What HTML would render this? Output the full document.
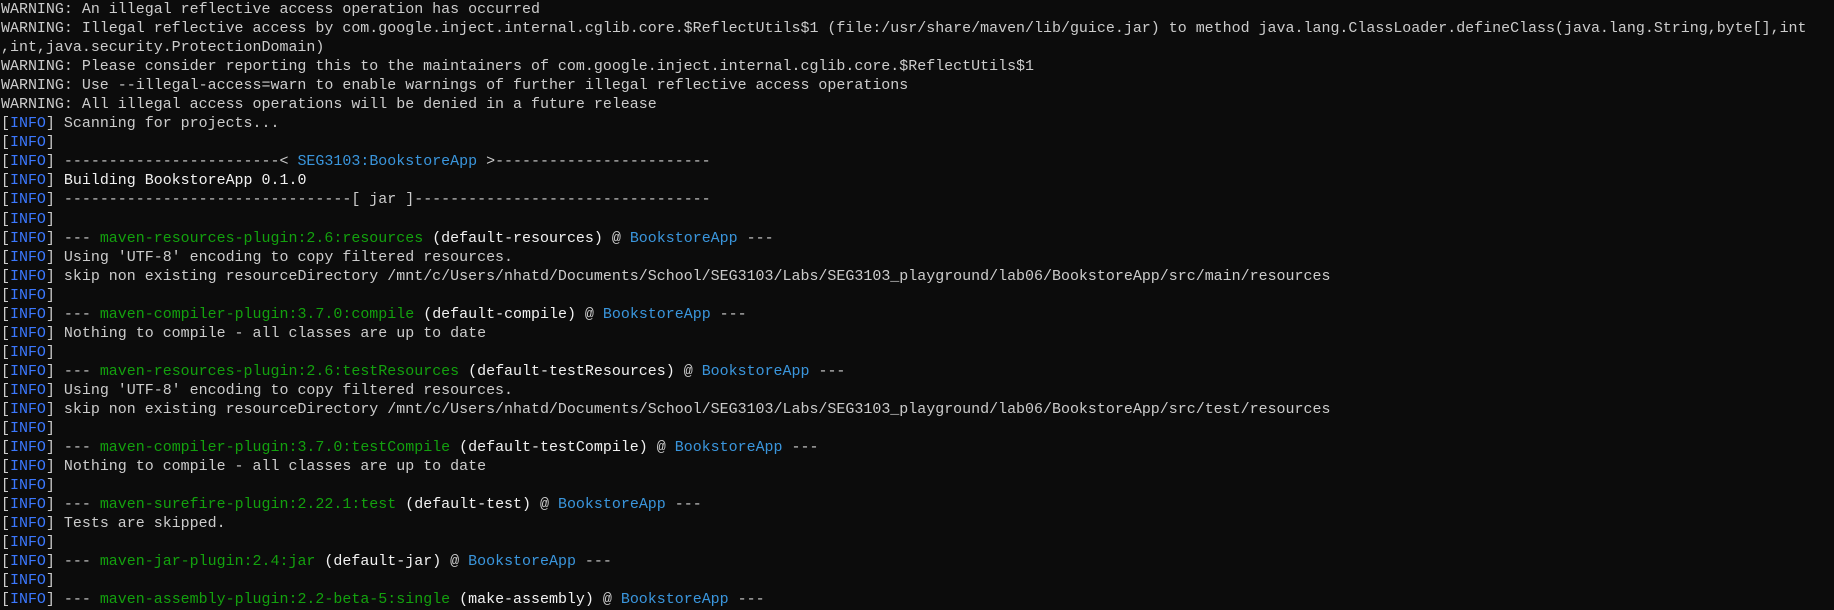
<!DOCTYPE html>
<html><head><meta charset="utf-8"><style>
html,body{margin:0;padding:0;background:#0c0c0c;width:1834px;height:610px;overflow:hidden}
pre{margin:1px 0 0 0;padding:0 0 0 1px;font-family:"Liberation Mono",monospace;font-size:14.98px;line-height:19.05px;color:#cccccc;white-space:pre}
.i{color:#3b78ff}.g{color:#13a10e}.b{color:#3a96dd}.w{color:#f2f2f2}
</style></head><body><pre>WARNING: An illegal reflective access operation has occurred
WARNING: Illegal reflective access by com.google.inject.internal.cglib.core.$ReflectUtils$1 (file:/usr/share/maven/lib/guice.jar) to method java.lang.ClassLoader.defineClass(java.lang.String,byte[],int
,int,java.security.ProtectionDomain)
WARNING: Please consider reporting this to the maintainers of com.google.inject.internal.cglib.core.$ReflectUtils$1
WARNING: Use --illegal-access=warn to enable warnings of further illegal reflective access operations
WARNING: All illegal access operations will be denied in a future release
[<span class="i">INFO</span>] Scanning for projects...
[<span class="i">INFO</span>]
[<span class="i">INFO</span>] ------------------------&lt; <span class="b">SEG3103:BookstoreApp</span> &gt;------------------------
[<span class="i">INFO</span>] <span class="w">Building BookstoreApp 0.1.0</span>
[<span class="i">INFO</span>] --------------------------------[ jar ]---------------------------------
[<span class="i">INFO</span>]
[<span class="i">INFO</span>] --- <span class="g">maven-resources-plugin:2.6:resources</span> <span class="w">(default-resources)</span> @ <span class="b">BookstoreApp</span> ---
[<span class="i">INFO</span>] Using 'UTF-8' encoding to copy filtered resources.
[<span class="i">INFO</span>] skip non existing resourceDirectory /mnt/c/Users/nhatd/Documents/School/SEG3103/Labs/SEG3103_playground/lab06/BookstoreApp/src/main/resources
[<span class="i">INFO</span>]
[<span class="i">INFO</span>] --- <span class="g">maven-compiler-plugin:3.7.0:compile</span> <span class="w">(default-compile)</span> @ <span class="b">BookstoreApp</span> ---
[<span class="i">INFO</span>] Nothing to compile - all classes are up to date
[<span class="i">INFO</span>]
[<span class="i">INFO</span>] --- <span class="g">maven-resources-plugin:2.6:testResources</span> <span class="w">(default-testResources)</span> @ <span class="b">BookstoreApp</span> ---
[<span class="i">INFO</span>] Using 'UTF-8' encoding to copy filtered resources.
[<span class="i">INFO</span>] skip non existing resourceDirectory /mnt/c/Users/nhatd/Documents/School/SEG3103/Labs/SEG3103_playground/lab06/BookstoreApp/src/test/resources
[<span class="i">INFO</span>]
[<span class="i">INFO</span>] --- <span class="g">maven-compiler-plugin:3.7.0:testCompile</span> <span class="w">(default-testCompile)</span> @ <span class="b">BookstoreApp</span> ---
[<span class="i">INFO</span>] Nothing to compile - all classes are up to date
[<span class="i">INFO</span>]
[<span class="i">INFO</span>] --- <span class="g">maven-surefire-plugin:2.22.1:test</span> <span class="w">(default-test)</span> @ <span class="b">BookstoreApp</span> ---
[<span class="i">INFO</span>] Tests are skipped.
[<span class="i">INFO</span>]
[<span class="i">INFO</span>] --- <span class="g">maven-jar-plugin:2.4:jar</span> <span class="w">(default-jar)</span> @ <span class="b">BookstoreApp</span> ---
[<span class="i">INFO</span>]
[<span class="i">INFO</span>] --- <span class="g">maven-assembly-plugin:2.2-beta-5:single</span> <span class="w">(make-assembly)</span> @ <span class="b">BookstoreApp</span> ---
</pre></body></html>
